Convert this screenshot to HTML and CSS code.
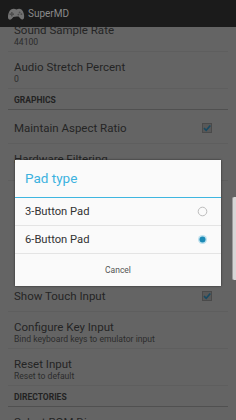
FILE: index.html
```html
<!DOCTYPE html>
<html lang="en">
<head>
    <meta charset="UTF-8">
    <meta name="viewport" content="width=device-width, initial-scale=1.0">
    <title>SuperMD Settings</title>
    <link rel="stylesheet" href="styles.css">
</head>
<body>

<div class="screen">
    <header class="actionbar">
        <svg class="app-icon" width="18" height="14" viewBox="0 0 18 14">
            <path d="M4 2.5 C6 1.2 8 1.8 9.5 2.4 C11 1.6 13.2 1.3 14.8 2.8 C16.6 4.6 17.6 8.6 17 11 C16.5 12.8 14.6 12.9 13.4 11.6 L11.6 9.6 C10.2 9.2 7.8 9.4 6.4 10 L4.6 12 C3.4 13.2 1.4 12.9 1.1 11 C0.7 8.4 1.8 4 4 2.5 Z" fill="#727272"/>
            <rect x="4" y="5" width="1.6" height="4.4" fill="#4e4e4e"/>
            <rect x="2.6" y="6.4" width="4.4" height="1.6" fill="#4e4e4e"/>
            <circle cx="12.6" cy="5.4" r="0.9" fill="#4e4e4e"/>
            <circle cx="14.4" cy="7.2" r="0.9" fill="#4e4e4e"/>
            <circle cx="11.4" cy="7.6" r="0.9" fill="#4e4e4e"/>
        </svg>
        <span class="app-title">SuperMD</span>
    </header>

    <div class="prefs">
        <div class="prefs-list">
            <div class="pref">
                <div class="pref-title">Sound Sample Rate</div>
                <div class="pref-summary">44100</div>
            </div>
            <div class="pref">
                <div class="pref-title">Audio Stretch Percent</div>
                <div class="pref-summary">0</div>
            </div>
            <div class="pref-header">GRAPHICS</div>
            <div class="pref single">
                <div class="pref-title">Maintain Aspect Ratio</div>
                <svg class="check" width="10" height="10" viewBox="0 0 10 10">
                    <rect x="0.5" y="0.5" width="9" height="9" fill="#585858" stroke="#4a4a4a"/>
                    <path d="M2 5.2 L4.2 7.3 L8.3 2.4" fill="none" stroke="#184a62" stroke-width="1.6"/>
                </svg>
            </div>
            <div class="pref">
                <div class="pref-title">Hardware Filtering</div>
                <div class="pref-summary"></div>
            </div>
            <!-- rows under the dialog -->
            <div class="pref-gap"></div>
            <div class="pref single">
                <div class="pref-title">Show Touch Input</div>
                <svg class="check" width="10" height="10" viewBox="0 0 10 10">
                    <rect x="0.5" y="0.5" width="9" height="9" fill="#585858" stroke="#4a4a4a"/>
                    <path d="M2 5.2 L4.2 7.3 L8.3 2.4" fill="none" stroke="#184a62" stroke-width="1.6"/>
                </svg>
            </div>
            <div class="pref">
                <div class="pref-title">Configure Key Input</div>
                <div class="pref-summary">Bind keyboard keys to emulator input</div>
            </div>
            <div class="pref">
                <div class="pref-title">Reset Input</div>
                <div class="pref-summary">Reset to default</div>
            </div>
            <div class="pref-header">DIRECTORIES</div>
            <div class="pref">
                <div class="pref-title">Select ROM Dir</div>
            </div>
        </div>
    </div>

    <div class="dialog">
        <div class="dialog-title">Pad type</div>
        <div class="dialog-item">
            <span>3-Button Pad</span>
            <svg class="radio" width="11" height="11" viewBox="0 0 11 11">
                <circle cx="5.5" cy="5.5" r="4.3" fill="none" stroke="#bcbcbc" stroke-width="1"/>
            </svg>
        </div>
        <div class="dialog-item">
            <span>6-Button Pad</span>
            <svg class="radio" width="11" height="11" viewBox="0 0 11 11">
                <circle cx="5.5" cy="5.5" r="4.5" fill="#bfe1ee"/>
                <circle cx="5.5" cy="5.5" r="3" fill="#1b8ab6"/>
            </svg>
        </div>
        <div class="dialog-button">Cancel</div>
    </div>

    <div class="edge-handle"></div>
</div>

</body>
</html>
```

FILE: styles.css
```css
body {
    margin: 0;
    padding: 0;
    font-family: Roboto, "Noto Sans", sans-serif;
}
.screen {
    position: relative;
    width: 236px;
    height: 420px;
    overflow: hidden;
    background-color: #646464;
}
.actionbar {
    display: flex;
    align-items: center;
    height: 27px;
    padding-left: 7px;
    background-color: #1b1b1b;
    position: relative;
    z-index: 1;
}
.app-icon {
    margin-right: 3px;
}
.app-title {
    font-size: 10px;
    color: #8a8a8a;
}
.prefs {
    height: 393px;
    overflow: hidden;
    margin: 0 8px;
}
.prefs-list {
    margin-top: -12px;
}
.pref {
    padding: 8px 16px 3px 6px;
    border-bottom: 1px solid #5e5e5e;
}
.pref.single {
    display: flex;
    align-items: center;
    justify-content: space-between;
    padding-top: 11px;
    padding-bottom: 8px;
}
.pref-title {
    font-size: 11.5px;
    line-height: 14px;
    color: #242424;
}
.pref-summary {
    font-size: 8.6px;
    line-height: 11px;
    min-height: 11px;
    color: #2c2c2c;
}
.pref-gap {
    height: 97px;
}
.check {
    display: block;
}
.pref-header {
    padding: 6px 6px 4px;
    font-size: 8.5px;
    line-height: 10px;
    font-weight: bold;
    color: #222;
    border-bottom: 1px solid #505050;
}
.dialog {
    position: absolute;
    left: 15px;
    top: 160px;
    width: 206px;
    background-color: #fafafa;
    box-shadow: 0 0 2px rgba(0, 0, 0, 0.6);
}
.dialog-title {
    height: 37px;
    line-height: 37px;
    padding-left: 10px;
    font-size: 13.5px;
    color: #3cb2df;
    border-bottom: 1px solid #3fb6e0;
}
.dialog-item {
    display: flex;
    align-items: center;
    justify-content: space-between;
    height: 27px;
    padding: 0 13px 0 10px;
    font-size: 11.2px;
    color: #333;
    border-bottom: 1px solid #e4e4e4;
}
.radio {
    display: block;
}
.dialog-button {
    height: 32px;
    line-height: 32px;
    text-align: center;
    font-size: 8.5px;
    color: #555;
}
.edge-handle {
    position: absolute;
    right: 0;
    top: 197px;
    width: 3px;
    height: 83px;
    background-color: #d6d6d6;
    border-left: 1px solid #9c9c9c;
    border-radius: 2px 0 0 2px;
}
```
